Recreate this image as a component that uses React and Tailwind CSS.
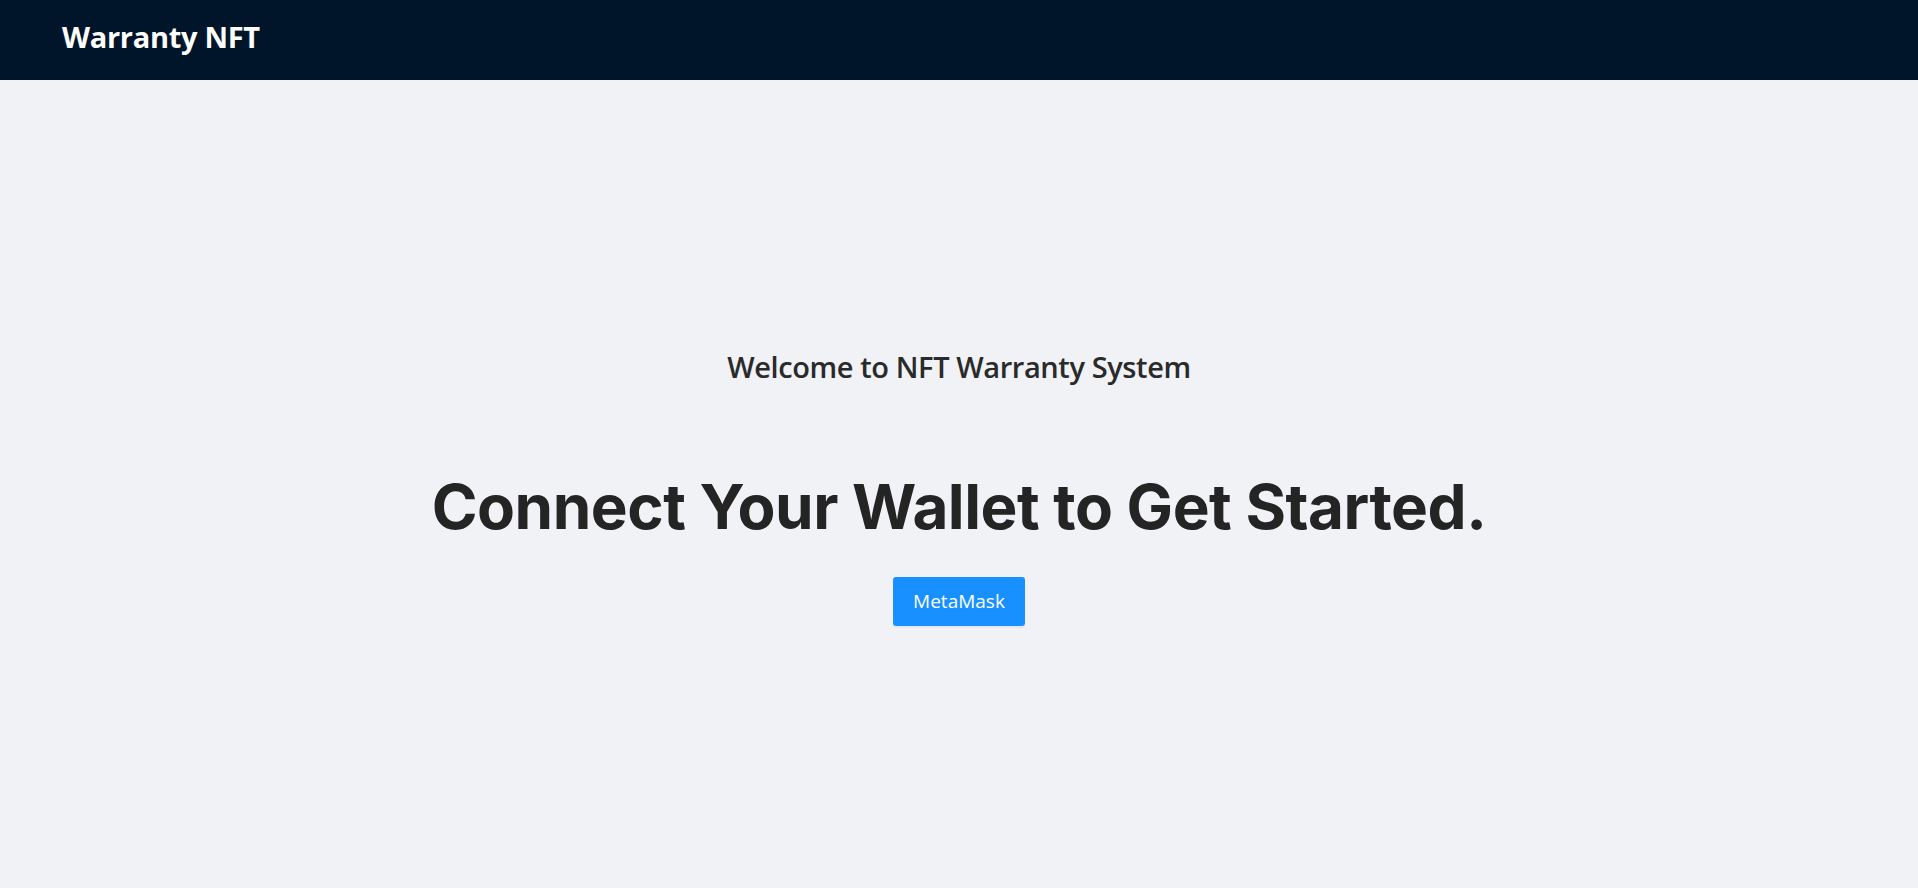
export default function App() {
  return (
    <div className="min-h-screen flex flex-col bg-[#f0f2f5] font-['Open_Sans',sans-serif]">
      <header className="h-20 bg-[#001529] flex items-center px-[62px] pb-[6px]">
        <h1 className="text-white text-[29px] font-bold tracking-[-0.3px]">Warranty NFT</h1>
      </header>

      <main className="flex-1 flex flex-col items-center pt-[268px] text-[#262626]">
        <h2 className="text-[29px] font-semibold leading-[38px] tracking-[-0.4px] text-[#2a2a2a]">Welcome to NFT Warranty System</h2>
        <h3 className="mt-[85px] font-['Inter',sans-serif] font-bold text-[62px] leading-[72px] tracking-[-0.5px] text-[#242424]">
          Connect Your Wallet to Get Started.
        </h3>
        <button className="mt-[34px] h-[49px] px-[20px] bg-[#1890ff] text-white text-[19px] rounded-[3px] shadow-[0_2px_0_rgba(0,0,0,0.045)]">
          MetaMask
        </button>
      </main>
    </div>
  );
}
